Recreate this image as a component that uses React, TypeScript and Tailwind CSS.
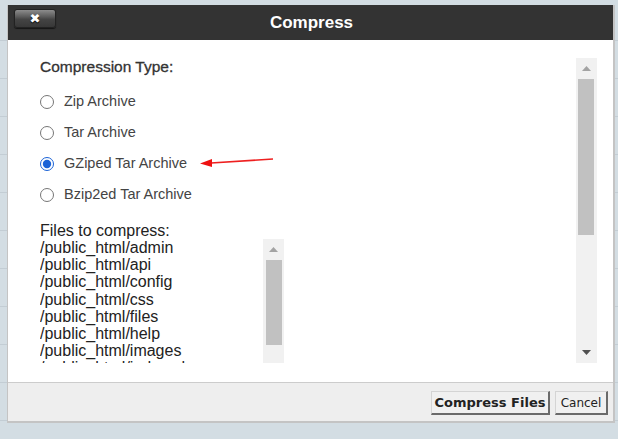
import React from "react";

const sans = { fontFamily: '"Liberation Sans", Arial, sans-serif' };

function ScrollArrow({ dir, color }: { dir: "up" | "down"; color: string }) {
  return (
    <svg width="9" height="5" viewBox="0 0 9 5" className="block">
      {dir === "up" ? (
        <polygon points="0,5 9,5 4.5,0" fill={color} />
      ) : (
        <polygon points="0,0 9,0 4.5,5" fill={color} />
      )}
    </svg>
  );
}

export default function App() {
  const rows = Array.from({ length: 12 });
  const files = [
    "/public_html/admin",
    "/public_html/api",
    "/public_html/config",
    "/public_html/css",
    "/public_html/files",
    "/public_html/help",
    "/public_html/images",
    "/public_html/index.php.save",
  ];
  const types = [
    { label: "Zip Archive", checked: false },
    { label: "Tar Archive", checked: false },
    { label: "GZiped Tar Archive", checked: true },
    { label: "Bzip2ed Tar Archive", checked: false },
  ];

  return (
    <div className="relative w-[618px] h-[439px] overflow-hidden bg-[#d3dde3]" style={sans}>
      {/* page behind the dialog */}
      <div className="flex flex-col pt-[3px]">
        {rows.map((_, i) => (
          <div key={i} className="h-[38px] border-b border-[#c3cdd4]" />
        ))}
      </div>

      {/* dialog */}
      <div className="absolute left-[7px] top-[5px] w-[608px] h-[418px] flex flex-col border-l border-r-2 border-b-2 border-[#c4c4c4]">
        {/* title bar */}
        <div className="relative h-[35px] shrink-0 bg-[#333333] flex items-center justify-center">
          <button className="absolute left-[6px] top-[4px] w-[42px] h-[19px] rounded-[3px] border border-[#222] bg-[linear-gradient(to_bottom,#8c8c8c_0%,#5a5a5a_40%,#444_55%,#383838_100%)] shadow-[0_1px_1px_rgba(0,0,0,0.6)] flex items-center justify-center">
            <span className="text-white text-[13px] leading-none [text-shadow:0_1px_1px_#000]" style={{ fontFamily: '"DejaVu Sans", sans-serif' }}>
              ✖
            </span>
          </button>
          <span className="text-white font-bold text-[17px] leading-none pl-[2px]">Compress</span>
        </div>

        {/* body */}
        <div className="relative h-[342px] shrink-0 bg-white pt-[18px] pl-[12px] pr-[16px]">
          <div className="h-[305px] flex overflow-hidden">
            <div className="flex-1 overflow-hidden pl-[20px]">
              <div className="text-[15.5px] leading-[18px] text-[#333] [-webkit-text-stroke:0.3px_#333]">Compression Type:</div>
              <div className="mt-[10px] flex flex-col">
                {types.map((t) => (
                  <label key={t.label} className="h-[31px] flex items-center">
                    <input
                      type="radio"
                      name="ctype"
                      defaultChecked={t.checked}
                      className="m-0 w-[14px] h-[14px] accent-[#1a62d6]"
                    />
                    <span className="ml-[10px] text-[14.5px] text-[#444]">{t.label}</span>
                  </label>
                ))}
              </div>
              <div className="mt-[12px] text-[16px] leading-[17px] text-[#222]">Files to compress:</div>
              <div className="flex w-[244px] h-[140px]">
                <div className="flex-1 overflow-hidden text-[16px] leading-[17.2px] text-[#222]">
                  {files.map((f) => (
                    <div key={f} className="whitespace-nowrap">{f}</div>
                  ))}
                </div>
                <div className="w-[21px] bg-[#f1f1f1] flex flex-col items-center">
                  <div className="h-[21px] flex items-center justify-center">
                    <ScrollArrow dir="up" color="#a3a3a3" />
                  </div>
                  <div className="w-[16px] h-[85px] bg-[#c1c1c1] ml-[1px]" />
                </div>
              </div>
            </div>
            {/* outer scrollbar */}
            <div className="w-[21px] bg-[#f1f1f1] flex flex-col items-center">
              <div className="h-[21px] flex items-center justify-center">
                <ScrollArrow dir="up" color="#a3a3a3" />
              </div>
              <div className="w-[16px] h-[156px] bg-[#c1c1c1] -ml-[1px]" />
              <div className="flex-1" />
              <div className="h-[21px] flex items-center justify-center">
                <ScrollArrow dir="down" color="#505050" />
              </div>
            </div>
          </div>

          {/* red annotation arrow */}
          <svg className="absolute left-[189px] top-[110px]" width="90" height="20" viewBox="0 0 90 20">
            <line x1="14" y1="13" x2="76" y2="9" stroke="#ee2020" strokeWidth="1.6" />
            <polygon points="3,13.5 15,9 15,17" fill="#ee1111" />
          </svg>
        </div>

        {/* footer */}
        <div className="flex-1 border-t border-[#cccccc] bg-[#eeeeee] flex items-start justify-end pt-[8px] pr-[5px] gap-[5px]">
          <button
            className="h-[24px] w-[119px] bg-[#f0f0f0] border-t border-l border-[#d4d4d4] border-r-2 border-b-2 border-r-[#6a6a6a] border-b-[#6a6a6a] text-[13px] font-bold text-[#222] leading-none"
            style={{ fontFamily: '"DejaVu Sans", Verdana, sans-serif' }}
          >
            Compress Files
          </button>
          <button
            className="h-[24px] w-[53px] bg-[#f0f0f0] border-t border-l border-[#d4d4d4] border-r-2 border-b-2 border-r-[#6a6a6a] border-b-[#6a6a6a] text-[12px] text-[#222] leading-none"
            style={{ fontFamily: '"DejaVu Sans", Verdana, sans-serif' }}
          >
            Cancel
          </button>
        </div>
      </div>
    </div>
  );
}
